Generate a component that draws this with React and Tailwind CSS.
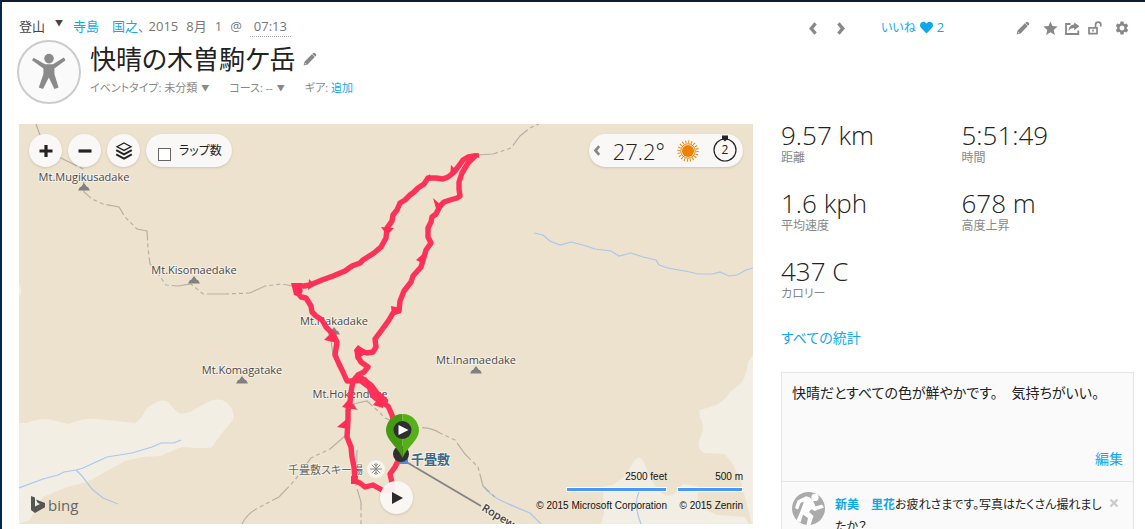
import React, { useState } from 'react';
import { FaHeart } from 'react-icons/fa';
import { MdSettings, MdStar } from 'react-icons/md';

const STATS = [
  { value: '9.57 km', label: '距離' },
  { value: '5:51:49', label: '時間' },
  { value: '1.6 kph', label: '平均速度' },
  { value: '678 m', label: '高度上昇' },
  { value: '437 C', label: 'カロリー' },
];

const PEAKS = [
  { name: 'Mt.Mugikusadake', x: 84, y: 181 },
  { name: 'Mt.Kisomaedake', x: 194, y: 274 },
  { name: 'Mt.Nakadake', x: 334, y: 325 },
  { name: 'Mt.Komagatake', x: 242, y: 374 },
  { name: 'Mt.Inamaedake', x: 476, y: 364 },
  { name: 'Mt.Hokendake', x: 350, y: 398 },
];

const Chevron = ({ className, flip }) => (
  <svg viewBox="0 0 8 13" className={className} aria-hidden="true">
    <path
      d={flip ? 'M0.2 2.4 L2.6 0.2 L8 6.5 L2.6 12.8 L0.2 10.6 L3.6 6.5 Z' : 'M7.8 2.4 L5.4 0.2 L0 6.5 L5.4 12.8 L7.8 10.6 L4.4 6.5 Z'}
      fill="currentColor"
    />
  </svg>
);

const PencilIcon = () => (
  <svg viewBox="0 0 14 14" className="h-[14px] w-[14px]" aria-hidden="true">
    <path
      d="M10 1.2 Q11 0.2 12 1.2 L12.9 2.1 Q13.8 3 12.9 4 L12.2 4.6 L9.3 1.9 Z M8.9 2.3 L11.8 5 L4.6 12.4 L0.6 13.4 L1.6 9.6 Z"
      fill="currentColor"
    />
    <path d="M2.2 11 L3.2 12 L1.8 12.3 Z" fill="#fff" />
  </svg>
);

const ShareIcon = () => (
  <svg viewBox="0 0 15 13" className="h-[13px] w-[15px]" aria-hidden="true">
    <path d="M5.5 2 H1 V12 H13.3 V8.5" fill="none" stroke="currentColor" strokeWidth="1.8" />
    <path d="M9.2 0.4 L14.4 4.3 L9.2 8.2 V6 C6.4 5.9 4.9 6.8 3.6 9.2 C3.6 5.2 5.6 2.9 9.2 2.6 Z" fill="currentColor" />
  </svg>
);

const UnlockIcon = () => (
  <svg viewBox="0 0 14 14" className="h-[14px] w-[14px]" aria-hidden="true">
    <path d="M1 6.8 H9 V12.6 H1 Z" fill="none" stroke="currentColor" strokeWidth="1.7" />
    <path d="M7.6 6.5 V3.6 C7.6 0.3 12.8 0.3 12.8 3.6 V5.6" fill="none" stroke="currentColor" strokeWidth="1.7" />
    <rect x="4.2" y="8.6" width="1.6" height="2" fill="currentColor" />
  </svg>
);

const ActivityBadge = () => (
  <svg viewBox="0 0 64 64" className="h-16 w-16 shrink-0" aria-hidden="true">
    <circle cx="32" cy="32" r="31" fill="#fafafa" stroke="#ccc" strokeWidth="2" />
    <g fill="#8a8a8a">
      <circle cx="32" cy="18.6" r="4.8" />
      <path d="M15 20.2 L16.6 17.8 L28 24.2 H36 L46.8 17.6 L48.6 20.2 L37.4 28.6 V34 L41.6 47.6 L37.4 49 L31.8 37.6 L26 49 L21.8 47.6 L26.4 34 V28.6 Z" />
    </g>
  </svg>
);

const LayersIcon = () => (
  <svg viewBox="0 0 18 18" className="h-[18px] w-[18px]" aria-hidden="true">
    <g fill="none" stroke="#222" strokeWidth="1.3">
      <path d="M9 1 L16 4.7 L9 8.4 L2 4.7 Z" />
      <path d="M1.2 8.2 L9 12.4 L16.8 8.2" strokeWidth="1.9" />
      <path d="M1.2 12.4 L9 16.6 L16.8 12.4" strokeWidth="1.9" />
    </g>
  </svg>
);

const SunIcon = () => (
  <svg viewBox="0 0 22 22" className="h-[22px] w-[22px]" aria-hidden="true">
    <circle cx="11" cy="11" r="6" fill="#f08000" />
    <circle cx="11" cy="11" r="7.2" fill="none" stroke="#f08000" strokeWidth="1" />
    <circle cx="11" cy="11" r="9.3" fill="none" stroke="#f08000" strokeWidth="2.8" strokeDasharray="1 1.92" />
  </svg>
);

const CompassIcon = () => (
  <svg viewBox="0 0 24 27" className="h-[27px] w-[24px]" aria-hidden="true">
    <circle cx="12" cy="15" r="11" fill="none" stroke="#222" strokeWidth="1.2" />
    <path d="M9 0.5 H15 V3.5 L12 6.5 L9 3.5 Z" fill="#222" />
    <text x="12" y="19" textAnchor="middle" fontSize="12" fill="#222">
      2
    </text>
  </svg>
);

const RunnerAvatar = () => (
  <svg viewBox="0 0 33 33" className="h-[33px] w-[33px] shrink-0" aria-hidden="true">
    <circle cx="16.5" cy="16.5" r="16.5" fill="#aaa" />
    <circle cx="23" cy="5.4" r="3.6" fill="#fff" />
    <path
      d="M3 16 L5.5 8.5 L14 4.2 Q18 4.5 21 9 L23.5 14.5 L30 12.5 L32 15.5 L22.5 19 L19.5 17 L17 20 L21.5 24 L18.5 33 H14.5 L16 26 L11 22.5 L8.5 30.5 L4.5 28.5 L9 18 L12 9.5 L8.5 11 L6 17.5 Z"
      fill="#fff"
    />
  </svg>
);

const MapDrawing = () => (
  <svg
    viewBox="19 124 734 400"
    preserveAspectRatio="xMidYMid slice"
    className="absolute inset-0 h-full w-full font-['Open_Sans','Noto_Sans_CJK_JP',sans-serif]"
    role="img"
  >
    {/* Terrain */}
    <g fill="#f3eee3">
      <path d="M19 423 L27 423 Q42 417 52 420 L68 424 Q84 418 97 419 L135 423 Q141 420 147 408 Q161 397 168 402 L178 413 Q182 415 192 411 L208 402 Q221 396 229 405 Q235 411 233 420 L222 433 L212 447 Q208 449 182 447 L160 456 L143 457 L125 461 L87 482 L67 487 L43 497 Q36 508 30 520 L19 524 Z" />
      <path d="M753 355 L748 362 Q747 376 740 384 L730 392 Q723 404 710 407 L700 410 Q698 414 702 422 Q705 428 699 441 Q697 449 704 453 L725 454 L732 463 L740 478 L752 524 H753 Z" />
      <path d="M601 524 L604 514 L603 487 L612 485 Q623 480 630 468 Q639 449 645 465 L653 483 Q663 500 674 494 L683 484 L697 486 L698 501 Q705 511 717 515 L745 517 L749 524 Z" />
      <path d="M19 283 Q22 288 21 294 L19 296 Z" />
    </g>

    {/* Rivers */}
    <g fill="none" stroke="#a9c6ef" strokeWidth="1.2">
      <path d="M19 488 L43 479 L58 475 L64 472 L76 470 L83 468 L107 457 L132 453 L152 447 L161 443 L174 443 L181 440" />
      <path d="M76 470 L82 476 L92 489 L103 498 L118 504" />
      <path d="M534 233 L543 235 L550 241 L560 245 L571 242 L583 245 L595 249 L611 251 L619 256 L631 253 L643 257 L656 260 L659 265 L668 268 L690 272 L698 274 L713 274 L720 272 L729 276 L737 275 L746 270 L753 268" />
      <path d="M483 486 Q490 495 500 500 T530 513 L541 524 M639 492 Q633 504 641 524" />
    </g>

    {/* Trails */}
    <g fill="none" stroke="#b5b0a6" strokeWidth="1.2" strokeDasharray="22 3 4 3 4 3">
      <path d="M36 124 L41 138 L61 158 L83 169 L84 192 L92 199 L103 204 L119 207 L125 217 L137 229 L147 231 L148 248 L150 264 L155 269 L166 285 L178 286 L191 284 L203 294 L225 294 L250 293 L265 286 L282 284 L298 287" />
      <path d="M476 155 L493 154 L511 148 L520 136 L530 128 L539 124" />
      <path d="M242 524 Q247 513 260 507 L279 497 L295 480 L311 458 L330 449 L345 436" />
      <path d="M353 404 L367 401 L378 411 L385 418 L410 428 Q430 426 440 433 L455 440 L465 454 L478 467 L483 486 L495 497" />
      <path d="M357 450 L356 485 L361 502 L361 524" />
    </g>
    <path d="M331 340 L333 355 L345 377" fill="none" stroke="#a9a49a" strokeWidth="1" />

    {/* Ropeway */}
    <path d="M403 460 L481 506" stroke="#858585" strokeWidth="2" />
    <text
      transform="translate(481 510) rotate(31)"
      fontSize="11"
      fontWeight="600"
      fill="#444"
      stroke="#f6f0e4"
      strokeWidth="2"
      paintOrder="stroke"
    >
      Ropeway
    </text>

    {/* Peaks */}
    {PEAKS.map((peak) => (
      <g key={peak.name}>
        <path
          d={`M${peak.x} ${peak.y + 2} l3 4 h-6 Z M${peak.x - 4} ${peak.y + 6} h8 l2 3.5 h-12 Z`}
          fill="#808080"
        />
        <text
          x={peak.x}
          y={peak.y}
          textAnchor="middle"
          fontSize="11"
          fill="#4a4a4a"
          stroke="#f6f0e4"
          strokeWidth="2"
          paintOrder="stroke"
        >
          {peak.name}
        </text>
      </g>
    ))}

    {/* Ski area */}
    <text x="288" y="474" fontSize="11" fill="#666" stroke="#f6f0e4" strokeWidth="2" paintOrder="stroke">
      千畳敷スキー場
    </text>
    <circle cx="376" cy="469" r="9" fill="#f8f5ef" />
    <path
      d="M376 463 V475 M370 469 H382 M371.8 464.8 L380.2 473.2 M380.2 464.8 L371.8 473.2 M374 464 L376 466 L378 464 M374 474 L376 472 L378 474"
      fill="none"
      stroke="#888"
      strokeWidth="1"
    />

    {/* Recorded track */}
    <g fill="none" stroke="#ff2d55" strokeWidth="5.4" strokeLinejoin="round" strokeLinecap="round" opacity="0.97">
      <path d="M475 156 L468 157 L463 160 L458 167 L453 173 L448 177 L443 179 L436 178 L428 178 L424 184 L418 188 L414 192 L410 195 L405 200 L400 203 L397 210 L393 215 L392 221 L387 228 L386 238 L381 247 L374 253 L363 260 L360 263 L352 266 L345 271 L333 276 L322 280 L310 285 L304 286 L298 286 L300 291 L298 293 L301 297 L306 298 L311 306 L312 312 L316 316 L322 320 L326 327 L333 334 L337 342 L335 355 L339 364 L342 370 L347 381 L353 381 L351 392 L350 403 L348 410 L348 420 L347 437 L351 447 L352 457 L354 467 L355 481 L360 483 L365 487 L373 485 L382 490 L392 491 L393 487 L390 474 L395 467 L398 461 L400 450 L396 430 L392 415 L388 406 L379 401 L373 396 L370 388 L365 380 L353 381" />
      <path d="M475 156 L468 163 L462 173 L459 182 L459 189 L460 196 L457 198 L450 200 L444 202 L440 206 L436 214 L432 217 L431 222 L428 228 L428 237 L431 243 L426 250 L424 257 L421 267 L413 276 L411 282 L404 291 L400 301 L399 311 L393 313 L389 320 L381 331 L375 339 L376 347 L373 352 L367 353 L358 350 L358 357 L361 362 L368 367 L364 372 L358 375 L353 381" />
      <path d="M362 380 L370 386 L376 394 L384 401" strokeWidth="8" />
    </g>
    <path
      d="M471 154 L479 153 L479 158 Z M451 165 L458 172 L450 177 Z M381 227 L394 228 L387 235 Z M427 177 L430 174 L431 181 Z M291 283 L302 283 L300 297 L294 295 Z M309 279 L315 285 L308 290 Z M433 198 L443 207 L437 212 Z M416 260 L425 252 L424 264 Z M391 306 L401 308 L392 316 Z M324 340 L332 332 L338 343 Z M358 345 L368 352 L356 360 L354 350 Z M342 407 L348 400 L358 410 Z M337 427 L348 418 L348 429 Z M351 476 L358 476 L357 484 L351 484 Z M373 405 L384 392 L383 408 Z"
      fill="#ff2d55"
    />

    {/* Station and start pin */}
    <rect x="399" y="455" width="9" height="9" fill="#4a90e2" />
    <text
      x="411"
      y="464"
      fontSize="13"
      fontWeight="700"
      fill="#3b6a8c"
      stroke="#f6f0e4"
      strokeWidth="2"
      paintOrder="stroke"
    >
      千畳敷
    </text>
    <circle cx="401" cy="454" r="8" fill="#2f2f2f" />
    <path d="M402.5 414 C393 414 386 421.5 386 430.5 C386 440 398 447 402.5 458 Z" fill="#449a10" />
    <path d="M402.5 414 C412 414 419 421.5 419 430.5 C419 440 407 447 402.5 458 Z" fill="#55b019" />
    <circle cx="402.5" cy="430" r="9" fill="#2f2f2f" />
    <path d="M398.5 425 L408.5 430 L398.5 435 Z" fill="#fff" />

    {/* Map provider logo */}
    <path d="M31 496 L35 497.5 V506.5 L40 504 L37.5 502.8 L36 499.5 L45 503 V507.2 L35 513 L31 510 Z" fill="#555" />
    <text x="48" y="511" fontSize="15" fill="#666">
      bing
    </text>
  </svg>
);

const RoundButton = ({ label, className = '', children }) => (
  <button
    aria-label={label}
    className={`flex h-[33px] w-[33px] items-center justify-center rounded-full bg-[#faf8f6] text-[#222] shadow-sm ${className}`}
  >
    {children}
  </button>
);

const ScaleBar = ({ label, credit, className }) => (
  <div className="text-right">
    <div>{label}</div>
    <div className={`my-1 ml-auto h-[5px] border border-white bg-[#4499ff] ${className}`} />
    <div className="pt-1">{credit}</div>
  </div>
);

const ActivityMap = () => {
  const [laps, setLaps] = useState(false);

  return (
    <section className="relative h-[400px] min-w-0 flex-1 overflow-hidden bg-[#ede2ce]">
      <MapDrawing />
      <div className="absolute inset-x-2.5 top-2.5 flex items-center justify-between">
        <div className="flex gap-1.5">
          <RoundButton label="拡大">
            <svg viewBox="0 0 14 14" className="h-[14px] w-[14px]" aria-hidden="true">
              <path d="M7 1 V13 M0.5 7 H13.5" stroke="#222" strokeWidth="3.2" />
            </svg>
          </RoundButton>
          <RoundButton label="縮小">
            <svg viewBox="0 0 14 14" className="h-[14px] w-[14px]" aria-hidden="true">
              <path d="M0.5 7 H13.5" stroke="#222" strokeWidth="3.2" />
            </svg>
          </RoundButton>
          <RoundButton label="レイヤー">
            <LayersIcon />
          </RoundButton>
          <label className="flex h-[33px] items-center gap-2 rounded-full bg-[#faf8f6] pr-2.5 pl-3 text-xs text-[#222] shadow-sm">
            <input
              type="checkbox"
              checked={laps}
              onChange={() => setLaps(!laps)}
              className="mt-2 h-[13px] w-[13px] appearance-none border border-[#666] bg-white checked:bg-[#666]"
            />
            ラップ数
          </label>
        </div>
        <div className="flex h-[33px] items-center rounded-full bg-[#faf8f6] px-1 text-[#222] shadow-sm">
          <button aria-label="閉じる" className="text-[#888]">
            <Chevron className="h-[11px] w-[8px]" />
          </button>
          <span className="pl-3 text-[22px] leading-8 font-light">27.2°</span>
          <span className="px-3">
            <SunIcon />
          </span>
          <span className="px-0.5 pb-1">
            <CompassIcon />
          </span>
        </div>
      </div>

      <RoundButton label="再生" className="absolute top-[357px] left-[361px] opacity-95">
        <svg viewBox="0 0 12 14" className="h-[14px] w-[12px]" aria-hidden="true">
          <path d="M1 1 L12 7 L1 13 Z" fill="#222" />
        </svg>
      </RoundButton>

      <div className="absolute right-2.5 bottom-3 flex gap-2.5 font-['Liberation_Sans',Arial,sans-serif] text-[10px] leading-3 text-[#111]">
        <ScaleBar label="2500 feet" credit="© 2015 Microsoft Corporation" className="w-[101px]" />
        <ScaleBar label="500 m" credit="© 2015 Zenrin" className="w-[66px]" />
      </div>
    </section>
  );
};

const Header = () => (
  <header className="flex items-start gap-7">
    <div className="min-w-0 flex-1">
      <div className="flex h-5 items-center text-[13px] leading-5 text-[#777]">
        <button className="flex items-center gap-2.5 text-[#444]">
          登山 <span className="pb-1.5 text-[8px] leading-4">▼</span>
        </button>
        <a href="#athlete" className="ml-2.5 text-[#11a8eb]">
          寺島　国之
        </a>
        <span>、</span>
        <span className="flex gap-2 pl-1">
          <span>2015</span>
          <span>8月</span>
          <span>1</span>
          <span>@</span>
          <span className="border-b border-dotted border-[#aaa] px-1">07:13</span>
        </span>
      </div>
      <div className="mt-1 -ml-0.5 flex gap-2">
        <ActivityBadge />
        <div className="pl-px">
          <div className="flex items-center gap-2">
            <h1 className="text-[26px] leading-[38px] text-[#222]">快晴の木曽駒ケ岳</h1>
            <button aria-label="名前を編集" className="text-[#888]">
              <PencilIcon />
            </button>
          </div>
          <div className="flex gap-5 text-[11px] leading-5 text-[#888]">
            <button className="flex items-center gap-1">
              イベントタイプ: 未分類 <span className="text-[8px]">▼</span>
            </button>
            <button className="flex items-center gap-1">
              コース: -- <span className="text-[8px]">▼</span>
            </button>
            <span>
              ギア:{' '}
              <a href="#gear" className="text-[#11a8eb]">
                追加
              </a>
            </span>
          </div>
        </div>
      </div>
    </div>

    <div className="flex h-6 w-[353px] shrink-0 items-center pr-1 pl-7 text-[#888]">
      <button aria-label="前へ">
        <Chevron className="h-[13px] w-[8px]" />
      </button>
      <button aria-label="次へ" className="ml-5">
        <Chevron className="h-[13px] w-[8px]" flip />
      </button>
      <button className="ml-9 flex items-center gap-1 text-xs text-[#11a8eb]">
        いいね
        <FaHeart size={13} />
        <span className="text-[13px]">2</span>
      </button>
      <div className="ml-auto flex items-center">
        <button aria-label="編集">
          <PencilIcon />
        </button>
        <button aria-label="お気に入り" className="ml-3">
          <MdStar size={17} />
        </button>
        <button aria-label="共有" className="ml-1.5">
          <ShareIcon />
        </button>
        <button aria-label="公開設定" className="ml-2">
          <UnlockIcon />
        </button>
        <button aria-label="設定" className="ml-3">
          <MdSettings size={16} />
        </button>
      </div>
    </div>
  </header>
);

const Sidebar = () => (
  <aside className="w-[353px] shrink-0">
    <dl className="grid grid-cols-2 gap-x-2 gap-y-4">
      {STATS.map((stat) => (
        <div key={stat.label} className="flex h-[52px] flex-col-reverse justify-end">
          <dt className="text-xs leading-6 text-[#888]">{stat.label}</dt>
          <dd className="text-[26px] leading-[22px] font-light text-[#222]">{stat.value}</dd>
        </div>
      ))}
    </dl>
    <a href="#stats" className="mt-4 block text-sm leading-5 text-[#11a8eb]">
      すべての統計
    </a>

    <div className="mt-6 border border-[#e5e5e5] bg-[#fafafa] text-[#222]">
      <div className="flex h-[108px] flex-col justify-between px-2.5 pt-2.5 pb-3">
        <p className="text-sm leading-5">快晴だとすべての色が鮮やかです。　気持ちがいい。</p>
        <a href="#edit" className="self-end text-sm leading-5 text-[#11a8eb]">
          編集
        </a>
      </div>
      <div className="flex items-start border-t border-[#e5e5e5] px-2.5 pt-2.5">
        <RunnerAvatar />
        <p className="mt-0.5 ml-2.5 min-w-0 flex-1 text-xs leading-[22px]">
          <a href="#friend" className="font-bold text-[#11a8eb]">
            新美　里花
          </a>
          お疲れさまです。写真はたくさん撮れましたか？
        </p>
        <button aria-label="削除" className="mt-1.5 mr-1 text-[#ccc]">
          <svg viewBox="0 0 10 10" className="h-[10px] w-[10px]" aria-hidden="true">
            <path d="M1.5 1.5 L8.5 8.5 M8.5 1.5 L1.5 8.5" stroke="currentColor" strokeWidth="2.4" />
          </svg>
        </button>
      </div>
    </div>
  </aside>
);

export default function App() {
  return (
    <div className="min-h-screen border-t-2 border-l-2 border-t-[#0a1c2e] border-l-[#06294a] bg-white pr-[11px] pl-[17px] font-['Open_Sans','Noto_Sans_CJK_JP',sans-serif] [font-feature-settings:'palt']">
      <div className="pt-3.5">
        <Header />
      </div>
      <main className="flex items-start gap-7 pt-5">
        <ActivityMap />
        <Sidebar />
      </main>
    </div>
  );
}
